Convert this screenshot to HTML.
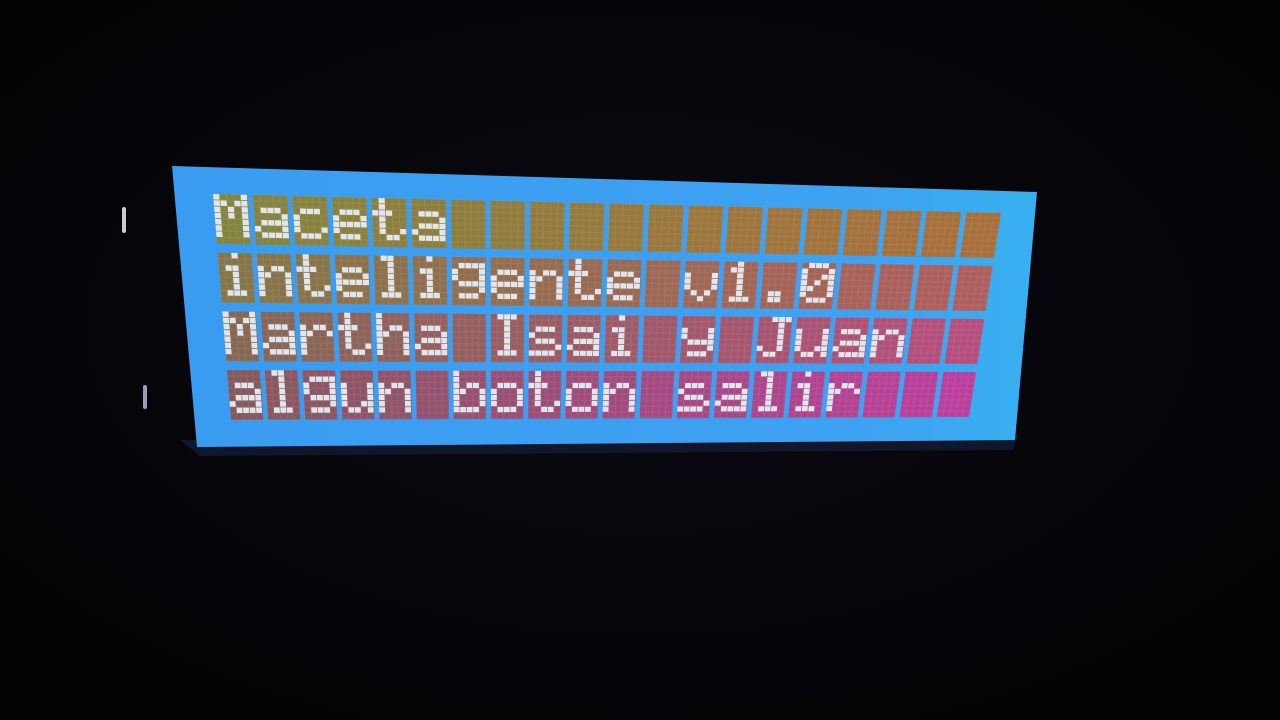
<!DOCTYPE html>
<html><head><meta charset="utf-8"><title>Maceta inteligente v1.0 - Martha Isai y Juan - algun boton salir</title>
<style>
html,body{margin:0;padding:0;background:#040407;width:1280px;height:720px;overflow:hidden;font-family:"Liberation Sans",sans-serif}
svg{display:block}
.txt{position:absolute;left:-9999px}
</style></head><body>
<div class="txt">Maceta<br>inteligente v1.0<br>Martha Isai y Juan<br>algun boton salir</div>
<svg id="s" width="1280" height="720" viewBox="0 0 1280 720" xmlns="http://www.w3.org/2000/svg">
<defs>
<radialGradient id="bg" cx="50%" cy="45%" r="70%">
<stop offset="0" stop-color="#0a0a12"/><stop offset="1" stop-color="#020204"/>
</radialGradient>
<linearGradient id="pn" x1="0" y1="0" x2="1" y2="0">
<stop offset="0" stop-color="#3a9cf0"/><stop offset="0.8" stop-color="#3ea2f2"/><stop offset="1" stop-color="#38b0f0"/>
</linearGradient>
</defs>
<rect width="1280" height="720" fill="url(#bg)"/>
<polygon points="180,440 1018,435 1013,450 200,456" fill="#12162a"/>
<polygon points="172,166 1037,192 1015,440 197,447" fill="url(#pn)"/>
<rect x="122" y="207" width="4" height="26" rx="2" fill="#c8ccd8"/>
<rect x="143" y="385" width="4" height="24" rx="2" fill="#9aa0b0"/>
<g id="g"></g>
</svg>
<script>
var TL=[213,194],TR=[1001,213],BL=[231,420],BR=[969,417];
function P(u,v){u/=19.87;v/=3.85;
var x=(1-u)*(1-v)*TL[0]+u*(1-v)*TR[0]+(1-u)*v*BL[0]+u*v*BR[0];
var y=(1-u)*(1-v)*TL[1]+u*(1-v)*TR[1]+(1-u)*v*BL[1]+u*v*BR[1];
return x.toFixed(1)+','+y.toFixed(1);}
function quad(u0,v0,u1,v1){return P(u0,v0)+' '+P(u1,v0)+' '+P(u1,v1)+' '+P(u0,v1);}
var F={
M:"10001,11011,10101,10101,10001,10001,10001",a:"00000,00000,01110,00001,01111,10001,01111",
c:"00000,00000,01110,10000,10000,10001,01110",e:"00000,00000,01110,10001,11111,10000,01110",
t:"01000,01000,11100,01000,01000,01001,00110",i:"00100,00000,01100,00100,00100,00100,01110",
n:"00000,00000,10110,11001,10001,10001,10001",l:"01100,00100,00100,00100,00100,00100,01110",
g:"00000,01111,10001,10001,01111,00001,01110",v:"00000,00000,10001,10001,10001,01010,00100",
"1":"00100,01100,00100,00100,00100,00100,01110",".":"00000,00000,00000,00000,00000,01100,01100",
"0":"01110,10001,10011,10101,11001,10001,01110",r:"00000,00000,10110,11001,10000,10000,10000",
h:"10000,10000,10110,11001,10001,10001,10001",I:"01110,00100,00100,00100,00100,00100,01110",
s:"00000,00000,01110,10000,01110,00001,11110",y:"00000,00000,10001,10001,01111,00001,01110",
J:"00111,00010,00010,00010,00010,10010,01100",u:"00000,00000,10001,10001,10001,10011,01101",
b:"10000,10000,10110,11001,10001,10001,11110",o:"00000,00000,01110,10001,10001,10001,01110"};
var L=["Maceta","inteligente v1.0","Martha Isai y Juan","algun boton salir"];
var C={tl:[132,132,62],tr:[168,110,60],bl:[134,88,92],br:[186,62,156]};
function col(c,r){var u=c/19,v=r/3,o=[];for(var k=0;k<3;k++){o.push(Math.round((1-u)*(1-v)*C.tl[k]+u*(1-v)*C.tr[k]+(1-u)*v*C.bl[k]+u*v*C.br[k]));}return 'rgb('+o.join(',')+')';}
var h='';
for(var r=0;r<4;r++){for(var c=0;c<20;c++){
var cw=0.87,ch=0.85;
h+='<polygon points="'+quad(c,r,c+cw,r+ch)+'" fill="'+col(c,r)+'"/>';
var chr=L[r][c];var gl=chr&&F[chr]?F[chr].split(','):null;
for(var py=0;py<8;py++){for(var px=0;px<5;px++){
var u0=c+cw*px/5,u1=c+cw*(px+0.9)/5,v0=r+ch*py/8,v1=r+ch*(py+0.88)/8;
if(gl&&py<7&&gl[py][px]=='1'){h+='<polygon points="'+quad(u0,v0,u1,v1)+'" fill="#e0e6ec"/>';}
else{h+='<polygon points="'+quad(u0,v0,u1,v1)+'" fill="'+col(c,r)+'" stroke="rgba(255,255,255,0.1)" stroke-width="0.5"/>';}
}}
}}
document.getElementById('g').innerHTML=h;
</script>
</body></html>
